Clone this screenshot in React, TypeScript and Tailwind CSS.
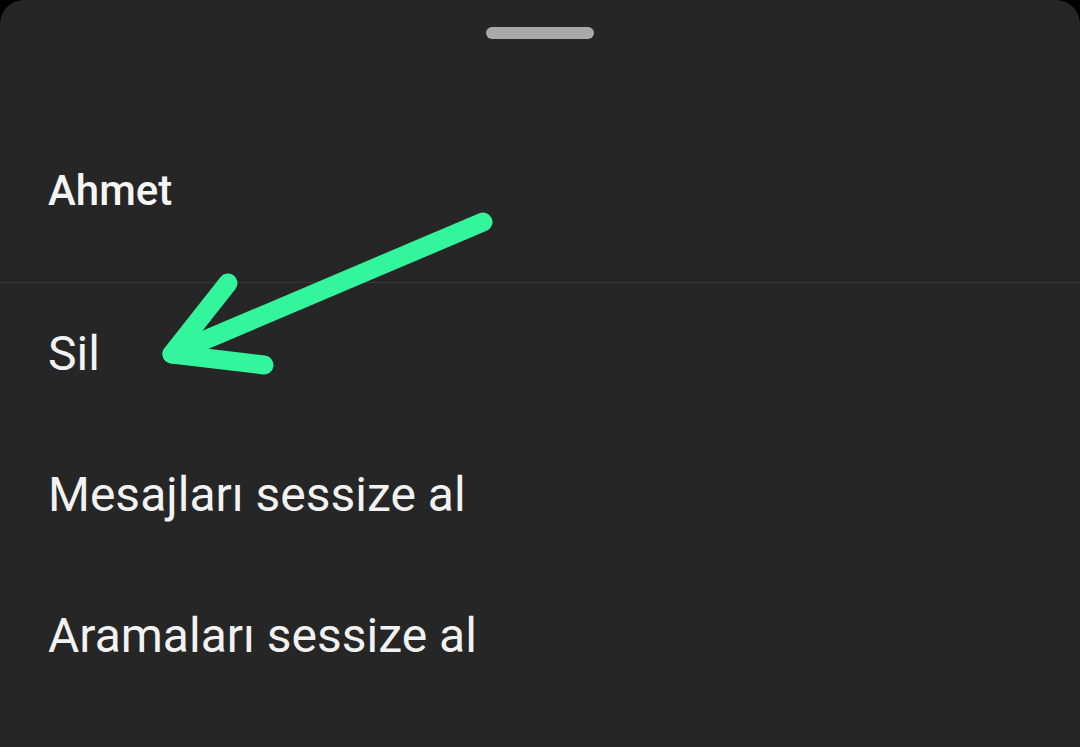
import React from "react";

export default function App() {
  const items = ["Sil", "Mesajları sessize al", "Aramaları sessize al"];
  return (
    <div className="relative h-[747px] w-[1080px] overflow-hidden bg-black" style={{ fontFamily: "Roboto, 'Noto Sans', sans-serif" }}>
      <div className="flex h-full flex-col rounded-t-[24px] bg-[#262626]">
        <div className="flex justify-center pt-[27px]">
          <div className="h-[12px] w-[108px] rounded-full bg-[#a9a9a9]" />
        </div>
        <div className="flex h-[243px] items-center pl-[48px] pt-[60px]">
          <span className="text-[42px] font-medium leading-[48px] text-[#f5f5f5]">Ahmet</span>
        </div>
        <div className="h-px bg-[#363636]" />
        {items.map((t) => (
          <div key={t} className="flex h-[141px] items-center pl-[48px]">
            <span className="text-[48px] font-normal leading-[56px] text-[#f2f2f2]">{t}</span>
          </div>
        ))}
      </div>
      <svg className="pointer-events-none absolute left-0 top-0" width="1080" height="747" viewBox="0 0 1080 747">
        <g stroke="#33f59b" strokeWidth="19" strokeLinecap="round" strokeLinejoin="round" fill="none">
          <path d="M483 222 L172 354" />
          <path d="M228 283 L172 354 L264 365" />
        </g>
      </svg>
    </div>
  );
}
